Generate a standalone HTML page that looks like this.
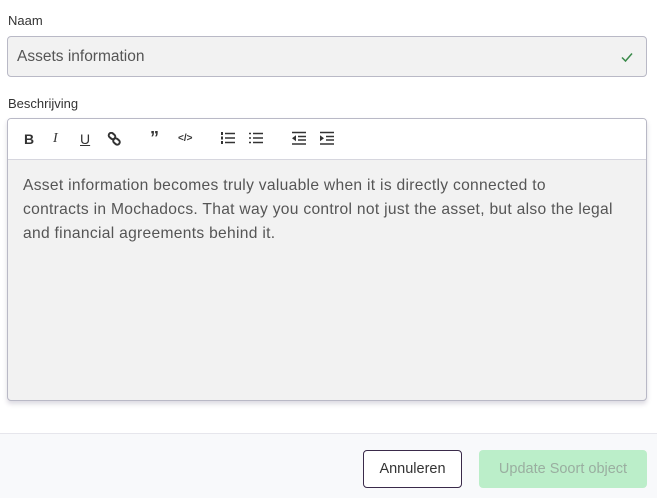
<!DOCTYPE html>
<html><head><style>
body{margin:0;width:657px;height:497px;background:#fff;font-family:"Liberation Sans",sans-serif;color:#3a3a4a;position:relative;overflow:hidden}
.lbl{position:absolute;left:8px;font-size:13px;color:#333}
.inp{position:absolute;left:7px;top:36px;width:640px;height:41px;background:#f2f2f2;border:1px solid #b9b9c6;border-radius:4px;box-sizing:border-box}
.inp span{position:absolute;left:9px;top:11px;font-size:15.5px;color:#555}
.ed{position:absolute;left:7px;top:118px;width:640px;height:283px;border:1px solid #b9b9c6;border-radius:4px;box-sizing:border-box;background:#f2f2f2;box-shadow:0 3px 5px rgba(60,50,90,.18);overflow:hidden}
.tb{height:40px;background:#fff;border-bottom:1px solid #d6d6de;position:relative}
.tb span{position:absolute;top:12px;font-size:14px;color:#333;font-weight:bold}
.txt{position:absolute;left:15px;top:55px;font-size:15.6px;line-height:24px;color:#555;white-space:nowrap;letter-spacing:0.3px}
.foot{position:absolute;left:0;top:433px;width:657px;height:64px;background:#f8f9fb;border-top:1px solid #e6e6ec}
.b1{position:absolute;left:363px;top:450px;width:99px;height:38px;border:1px solid #3a2a4a;border-radius:4px;box-sizing:border-box;background:#fff;font-size:14.5px;text-align:center;line-height:36px;color:#333}
.b2{position:absolute;left:479px;top:450px;width:168px;height:38px;border-radius:4px;background:#bbeec9;font-size:14.5px;text-align:center;line-height:38px;color:#9aaea0}
</style></head><body>
<div class="lbl" style="top:13px">Naam</div>
<div class="inp"><span>Assets information</span>
<svg style="position:absolute;right:12px;top:14px" width="14" height="12" viewBox="0 0 14 12"><path d="M2 6.5l3.5 3.5L12 2.5" fill="none" stroke="#3a8a4a" stroke-width="1.5"/></svg></div>
<div class="lbl" style="top:96px">Beschrijving</div>
<div class="ed">
<div class="tb">
<span style="left:16px">B</span>
<span style="left:45px;font-style:italic;font-family:'Liberation Serif',serif;font-weight:normal">I</span>
<span style="left:72px;text-decoration:underline;font-weight:normal">U</span>
<svg style="position:absolute;left:99px;top:13px" width="15" height="15" viewBox="0 0 15 15"><g fill="none" stroke="#333" stroke-width="2"><rect x="1.5" y="1.5" width="7" height="5" rx="2.5" transform="rotate(40 5 4)"/><rect x="6" y="7" width="7" height="5" rx="2.5" transform="rotate(40 9.5 9.5)"/></g></svg>
<span style="left:142px;font-size:18px;top:9px">&#8221;</span>
<span style="left:170px;font-size:10px;top:14px">&lt;/&gt;</span>
<svg style="position:absolute;left:213px;top:12px" width="14" height="14" viewBox="0 0 14 14"><g stroke="#333" stroke-width="1.6"><path d="M4 2.5h10M4 7h10M4 11.5h10"/></g><g fill="#333"><rect x="0" y="1" width="2" height="3"/><rect x="0" y="5.5" width="2" height="3"/><rect x="0" y="10" width="2" height="3"/></g></svg>
<svg style="position:absolute;left:241px;top:12px" width="14" height="14" viewBox="0 0 14 14"><g stroke="#333" stroke-width="1.6"><path d="M4 2.5h10M4 7h10M4 11.5h10M0 2.5h2M0 7h2M0 11.5h2"/></g></svg>
<svg style="position:absolute;left:284px;top:12px" width="14" height="14" viewBox="0 0 14 14"><g stroke="#333" stroke-width="1.6"><path d="M0 1.5h14M6 5.5h8M6 9h8M0 13h14"/></g><path d="M0 7.2l4-3v6z" fill="#333"/></svg>
<svg style="position:absolute;left:312px;top:12px" width="14" height="14" viewBox="0 0 14 14"><g stroke="#333" stroke-width="1.6"><path d="M0 1.5h14M6 5.5h8M6 9h8M0 13h14"/></g><path d="M4 7.2l-4-3v6z" fill="#333"/></svg>
</div>
<div class="txt">Asset information becomes truly valuable when it is directly connected to<br>contracts in Mochadocs. That way you control not just the asset, but also the legal<br>and financial agreements behind it.</div>
</div>
<div class="foot"></div>
<div class="b1">Annuleren</div>
<div class="b2">Update Soort object</div>
</body></html>
